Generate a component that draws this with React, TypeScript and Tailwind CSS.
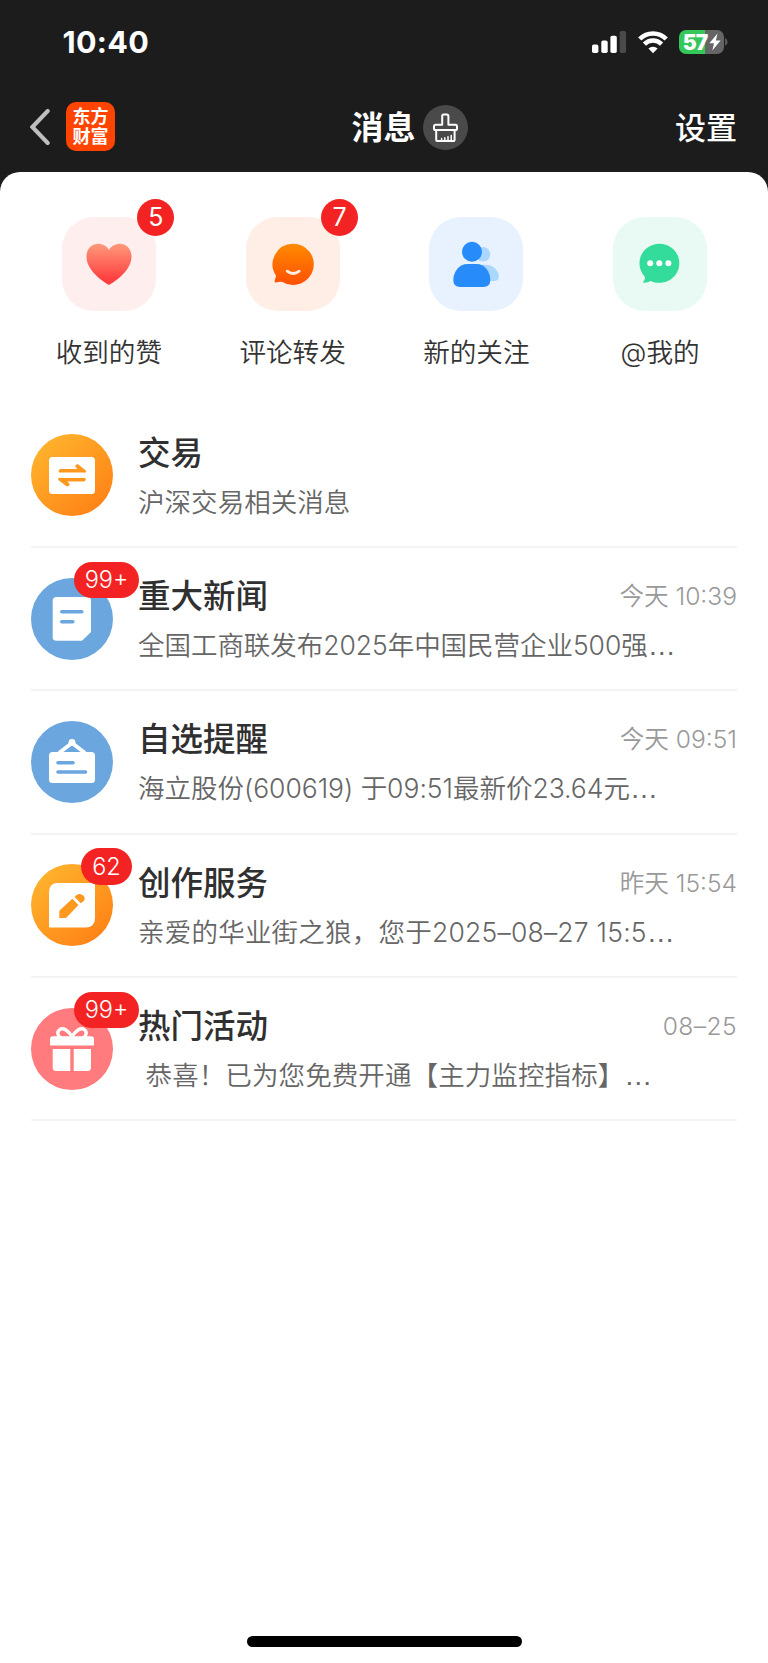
import type { ReactNode } from "react";

function SignalIcon() {
  return (
    <svg width="35" height="22" viewBox="0 0 35 22" fill="#fff">
      <rect x="0" y="13.6" width="6.4" height="8.4" rx="1.8" />
      <rect x="9.3" y="9.6" width="6.4" height="12.4" rx="1.8" />
      <rect x="18.4" y="4.8" width="6.4" height="17.2" rx="1.8" />
      <rect x="27.7" y="0" width="6.4" height="22" rx="1.8" fill="#4a4a4a" />
    </svg>
  );
}

function WifiIcon() {
  return (
    <svg width="30" height="23" viewBox="0 0 30 23" fill="none" stroke="#fff">
      <path d="M1.8 8A18.6 18.6 0 0 1 28.2 8" strokeWidth="4.6" />
      <path d="M6.4 13.1A12 12 0 0 1 23.6 13.1" strokeWidth="4.4" />
      <path d="M10.4 17.5A6.6 6.6 0 0 1 19.6 17.5L15 22.3Z" fill="#fff" stroke="none" />
    </svg>
  );
}

function BatteryIcon() {
  return (
    <div className="flex items-center">
      <div className="flex h-6 w-[45px] items-center justify-center rounded-[7px] bg-linear-to-r from-[#34c759] from-58% to-[#656565] to-58% pl-[2px]">
        <span className="pt-[2px] font-[Inter,sans-serif] text-[21px] leading-6 font-black tracking-[-1px] text-white">57</span>
        <svg className="ml-[2px] shrink-0" width="12" height="18" viewBox="0 0 12 18" fill="#fff">
          <path d="M8.5 0.5L0.4 10.2H5L3.3 17.5L11.6 7.4H6.9Z" />
        </svg>
      </div>
      <svg className="ml-[1.5px]" width="3" height="8" viewBox="0 0 3 8">
        <path d="M0 0A4.4 4.4 0 0 1 0 8Z" fill="#5a5a5a" />
      </svg>
    </div>
  );
}

function BrushIcon() {
  return (
    <svg width="45" height="45" viewBox="0 0 45 45" fill="none" stroke="#fff" strokeWidth="2" strokeLinejoin="round" strokeLinecap="round">
      <circle cx="22.5" cy="22.5" r="22.5" fill="#4a4a4a" stroke="none" />
      <path d="M19.2 19.8V11.2Q19.2 9.6 20.8 9.6H23.8Q25.4 9.6 25.4 11.2V19.8H32.4Q34 19.8 34 21.4V23.4Q34 25 32.4 25H12.6Q11 25 11 23.4V21.4Q11 19.8 12.6 19.8Z" />
      <path d="M13.2 25V34.4Q13.2 36 14.8 36H30Q31.6 36 31.6 34.4V25" />
      <path d="M18.6 35V33.6M21.8 35V32.8M25 35V31.8M28.2 35V30.4" strokeWidth="1.5" />
    </svg>
  );
}

function HeartIcon() {
  return (
    <svg width="94" height="94" viewBox="0 0 94 94">
      <defs>
        <linearGradient id="heart" x1="0" y1="0" x2="0" y2="1">
          <stop offset="0" stopColor="#ff9a7b" />
          <stop offset="0.85" stopColor="#ff4040" />
        </linearGradient>
      </defs>
      <path d="M47 68C36 61.5 24.5 51.5 24.5 39.5C24.5 32 29.5 26.7 36 26.7C40.8 26.7 45 29 47 33C49 29 53.2 26.7 58 26.7C64.5 26.7 69.5 32 69.5 39.5C69.5 51.5 58 61.5 47 68Z" fill="url(#heart)" />
    </svg>
  );
}

function CommentIcon() {
  return (
    <svg width="94" height="94" viewBox="0 0 94 94">
      <defs>
        <linearGradient id="comment" x1="0" y1="0" x2="0" y2="1">
          <stop offset="0" stopColor="#ff8a00" />
          <stop offset="1" stopColor="#ff5000" />
        </linearGradient>
      </defs>
      <path d="M47 26.7A20.6 20.6 0 1 1 36.5 64.9Q34 64.3 30 65.4Q28.3 65.7 28.7 63.8L30.1 58.8A20.6 20.6 0 0 1 47 26.7Z" fill="url(#comment)" />
      <path d="M41.2 54.2Q47 58.8 53.2 54.2" fill="none" stroke="#ffeee6" strokeWidth="2.8" strokeLinecap="round" />
    </svg>
  );
}

function FollowIcon() {
  return (
    <svg width="94" height="94" viewBox="0 0 94 94">
      <circle cx="54" cy="37.3" r="7.3" fill="#a9d7ff" />
      <path d="M50 47.7H57C64 47.7 69.8 53.5 69.8 59.5Q69.8 64 65 64H50Z" fill="#a9d7ff" />
      <circle cx="43" cy="34.7" r="10" fill="#278cfa" />
      <path d="M38.5 47H47.5C55.5 47 61.3 54.5 61.3 63Q61.3 70 54.5 70H31Q24.3 70 24.3 63C24.3 54.5 30.5 47 38.5 47Z" fill="#278cfa" />
    </svg>
  );
}

function MentionIcon() {
  return (
    <svg width="94" height="94" viewBox="0 0 94 94">
      <path d="M46.5 26.7C57.6 26.7 66.3 35.4 66.3 46.2C66.3 57 57.6 65.7 46.5 65.7C43 65.7 40.2 65.2 37.6 63.9Q34.5 65.9 30.6 65.7Q29.3 65.2 30.7 64.2Q32.3 62.8 31.7 59.4Q26.5 54 26.5 46.2C26.5 35.4 35.4 26.7 46.5 26.7Z" fill="#33dc9b" />
      <circle cx="37.2" cy="46.2" r="3" fill="#fff" />
      <circle cx="46.3" cy="46.2" r="3" fill="#fff" />
      <circle cx="55.4" cy="46.2" r="3" fill="#fff" />
    </svg>
  );
}

function OrangeGradient({ id }: { id: string }) {
  return (
    <defs>
      <linearGradient id={id} x1="0.15" y1="0.1" x2="0.85" y2="0.9">
        <stop offset="0" stopColor="#ffb22c" />
        <stop offset="1" stopColor="#ff8316" />
      </linearGradient>
    </defs>
  );
}

function TradeIcon() {
  return (
    <svg width="82" height="82" viewBox="0 0 82 82">
      <OrangeGradient id="trade" />
      <circle cx="41" cy="41" r="41" fill="url(#trade)" />
      <rect x="18" y="23" width="46" height="37" rx="3.5" fill="#fff" />
      <path d="M29.3 38.5Q27.2 38.5 27.6 36.9Q28 35 30 35H46.5L44.5 33Q43.800 30 47 30.2L54.6 36.2Q56 38.5 54 38.5Z" fill="#ff981f" />
      <path d="M53.2 44Q55.300 44 54.900 45.600Q54.500 47.500 52.500 47.500H36.3L38.5 49.700Q38.800 52.500 35.5 52.3L27.6 46.2Q26.2 44 28.5 44Z" fill="#ff981f" />
    </svg>
  );
}

function NewsIcon() {
  return (
    <svg width="82" height="82" viewBox="0 0 82 82">
      <circle cx="41" cy="41" r="41" fill="#6ba6de" />
      <path d="M25.5 19H56.5Q60 19 60 22.5V54L51 62.7H25.5Q21.700 62.7 21.700 59.2V22.5Q21.700 19 25.5 19Z" fill="#fff" />
      <path d="M30.8 33.7H50.8M30.8 43.8H41.8" stroke="#6ba6de" strokeWidth="3.6" strokeLinecap="round" />
    </svg>
  );
}

function ReminderIcon() {
  return (
    <svg width="82" height="82" viewBox="0 0 82 82">
      <circle cx="41" cy="41" r="41" fill="#6ba6de" />
      <path d="M28 32L41 22L54 32" fill="none" stroke="#fff" strokeWidth="3.8" />
      <circle cx="41" cy="21.3" r="3.4" fill="#fff" />
      <rect x="18" y="31" width="46" height="31" rx="3.5" fill="#fff" />
      <path d="M27 41.7H42M27 51H54.5" stroke="#6ba6de" strokeWidth="3.6" strokeLinecap="round" />
    </svg>
  );
}

function CreateIcon() {
  return (
    <svg width="82" height="82" viewBox="0 0 82 82">
      <OrangeGradient id="create" />
      <circle cx="41" cy="41" r="41" fill="url(#create)" />
      <path d="M27 19H64V54Q64 63.5 54.5 63.5H18V28Q18 19 27 19Z" fill="#fff" />
      <path d="M28.3 54V46.8L41.3 34.8L47.5 41L35 54Z" fill="#ff981f" />
      <path d="M43.5 32.8L46 30.8Q49.3 28.7 52.3 31.6Q55 34.5 52.7 37L49.7 39.3Z" fill="#ff981f" />
    </svg>
  );
}

function GiftIcon() {
  return (
    <svg width="82" height="82" viewBox="0 0 82 82">
      <circle cx="41" cy="41" r="41" fill="#ff7b7e" />
      <path d="M41 28.5C37 22.5 32 19 28.8 21.5C25.5 24 26.5 28 30 30M41 28.5C45 22.5 50 19 53.2 21.5C56.5 24 55.5 28 52 30" fill="none" stroke="#fff" strokeWidth="3.4" />
      <path d="M22 28.3H60Q63 28.3 63 31.3V37.5H19V31.3Q19 28.3 22 28.3Z" fill="#fff" />
      <path d="M21.7 41H39.3V63H25.2Q21.7 63 21.7 59.5ZM42.7 41H60V59.5Q60 63 56.5 63H42.7Z" fill="#fff" />
    </svg>
  );
}

type Shortcut = { label: string; tile: string; icon: ReactNode; count?: string };

const shortcuts: Shortcut[] = [
  { label: "收到的赞", tile: "bg-[#feeeee]", icon: <HeartIcon />, count: "5" },
  { label: "评论转发", tile: "bg-[#ffeee6]", icon: <CommentIcon />, count: "7" },
  { label: "新的关注", tile: "bg-[#e8f2fe]", icon: <FollowIcon /> },
  { label: "@我的", tile: "bg-[#e8faf3]", icon: <MentionIcon /> },
];

type Message = {
  title: string;
  text: string;
  icon: ReactNode;
  truncated?: boolean;
  textClass?: string;
  time?: string;
  timeClass?: string;
  badge?: string;
  badgeClass?: string;
};

const messages: Message[] = [
  { title: "交易", text: "沪深交易相关消息", textClass: "tracking-[0.05px]", icon: <TradeIcon /> },
  {
    title: "重大新闻",
    text: "全国工商联发布2025年中国民营企业500强",
    truncated: true,
    textClass: "tracking-[-0.04px]",
    icon: <NewsIcon />,
    time: "今天 10:39",
    badge: "99+",
    badgeClass: "left-[43px] w-[65px]",
  },
  {
    title: "自选提醒",
    text: "海立股份(600619) 于09:51最新价23.64元",
    truncated: true,
    textClass: "tracking-[-0.02px]",
    icon: <ReminderIcon />,
    time: "今天 09:51",
  },
  {
    title: "创作服务",
    text: "亲爱的华业街之狼，您于2025–08–27 15:5",
    truncated: true,
    textClass: "tracking-[0.22px]",
    icon: <CreateIcon />,
    time: "昨天 15:54",
    badge: "62",
    badgeClass: "left-[50px] w-[51px]",
  },
  {
    title: "热门活动",
    text: " 恭喜！已为您免费开通【主力监控指标】",
    truncated: true,
    textClass: "tracking-[0.1px]",
    icon: <GiftIcon />,
    time: "08–25",
    timeClass: "tracking-[0.4px]",
    badge: "99+",
    badgeClass: "left-[43px] w-[65px]",
  },
];

function ShortcutItem({ item }: { item: Shortcut }) {
  return (
    <div className="flex flex-col items-center">
      <div className={`relative size-[94px] rounded-[32px] ${item.tile}`}>
        {item.icon}
        {item.count && (
          <span className="absolute -top-[18.5px] left-[75.5px] flex size-[37px] items-center justify-center rounded-full bg-[#f42323] text-[25px] leading-none text-white">
            {item.count}
          </span>
        )}
      </div>
      <span className="mt-[20.5px] text-[26.6px] leading-10 font-[350] whitespace-nowrap text-[#333]">{item.label}</span>
    </div>
  );
}

function MessageRow({ item }: { item: Message }) {
  return (
    <div className="flex h-[143.4px] items-center border-b-2 border-[#f4f4f4]">
      <div className="relative size-[82px] shrink-0">
        {item.icon}
        {item.badge && (
          <span
            className={`absolute -top-[16px] flex h-[36.5px] items-center justify-center rounded-full bg-[#f42323] text-[23.5px] leading-none font-light text-white ${item.badgeClass}`}
          >
            {item.badge}
          </span>
        )}
      </div>
      <div className="ml-[25px] flex min-w-0 flex-1 flex-col pt-[6px]">
        <div className="flex items-center justify-between">
          <span className="text-[32.5px] leading-[48px] font-medium text-[#303030]">{item.title}</span>
          {item.time && (
            <span className={`pb-[2px] text-[24.6px] leading-[46px] font-[350] text-[#999] ${item.timeClass ?? ""}`}>{item.time}</span>
          )}
        </div>
        <span className={`-mt-px text-[26.5px] leading-[50px] font-[350] whitespace-pre text-[#666] ${item.textClass ?? ""}`}>
          {item.text}
          {item.truncated && <span className="font-['Liberation_Sans',sans-serif] text-[28px] leading-none">…</span>}
        </span>
      </div>
    </div>
  );
}

export default function App() {
  return (
    <div className="flex h-[1663px] w-[768px] flex-col overflow-hidden bg-[#1c1c1c] font-[Inter,'Noto_Sans_CJK_SC',sans-serif]">
      <div className="flex h-[84px] items-center justify-between pr-[40px] pl-[62.5px]">
        <span className="text-[30.5px] leading-none font-bold tracking-[0.3px] text-white">10:40</span>
        <div className="flex items-center gap-[11px]">
          <SignalIcon />
          <WifiIcon />
          <BatteryIcon />
        </div>
      </div>
      <header className="grid h-[88px] grid-cols-[1fr_auto_1fr] items-center pr-[31px] pb-[3px] pl-[30px]">
        <div className="flex items-center gap-[16px]">
          <svg className="mt-px" width="20" height="36" viewBox="0 0 20 36" fill="none" stroke="#bfbfbf" strokeWidth="4" strokeLinecap="round" strokeLinejoin="miter">
            <path d="M17.7 2L2.4 18L17.7 34" />
          </svg>
          <div className="flex size-[49px] flex-col items-center justify-center rounded-[10px] bg-[#ff4400] text-[18px] leading-[20px] font-bold text-white">
            <span>东方</span>
            <span>财富</span>
          </div>
        </div>
        <h1 className="pt-[3px] text-[32px] leading-none font-bold text-white">消息</h1>
        <div className="flex items-center justify-between pt-px pl-[7.5px]">
          <BrushIcon />
          <span className="text-[31px] leading-none font-medium text-white">设置</span>
        </div>
      </header>
      <main className="flex flex-1 flex-col rounded-t-[20px] bg-white">
        <div className="grid h-[232.5px] grid-cols-4 pt-[45px] pr-[16px] pl-[17px]">
          {shortcuts.map((item) => (
            <ShortcutItem key={item.label} item={item} />
          ))}
        </div>
        <div className="flex flex-col px-[31px]">
          {messages.map((item) => (
            <MessageRow key={item.title} item={item} />
          ))}
        </div>
        <div className="mt-auto mb-[16.5px] h-[10.5px] w-[275px] self-center rounded-full bg-black" />
      </main>
    </div>
  );
}
